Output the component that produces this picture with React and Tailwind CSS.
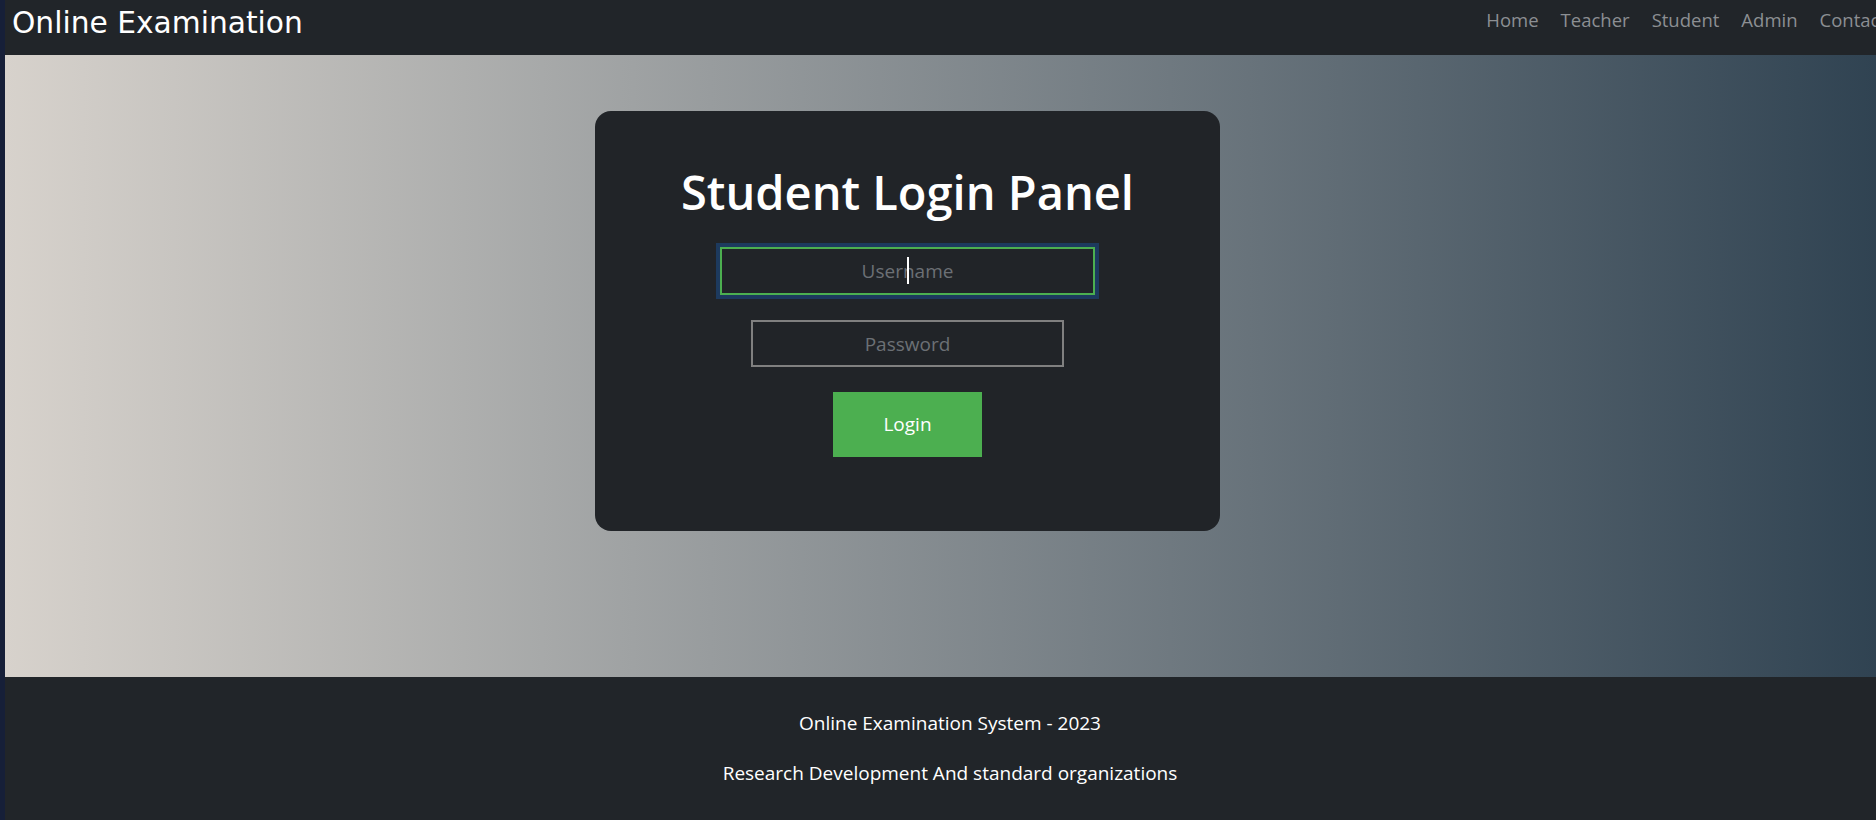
import { useState } from 'react'

const navLinks = ['Home', 'Teacher', 'Student', 'Admin', 'Contact']

export default function App() {
  const [username, setUsername] = useState('')
  const [password, setPassword] = useState('')

  return (
    <div className="flex h-[820px] w-full overflow-hidden bg-[#161f38] pl-[5px]">
      <div className="flex min-w-0 flex-1 flex-col">
        {/* Barre de navigation */}
        <nav className="flex h-[55px] shrink-0 items-start justify-between bg-[#212529] pl-[7px]">
          <span className="pt-[3px] font-['DejaVu_Sans',sans-serif] text-[29.7px] leading-[40px] text-white">
            Online Examination
          </span>
          <ul className="mr-[-10px] flex gap-[22px] pt-[6px] font-['Open_Sans',sans-serif] text-[18.5px] leading-[28px] text-[#8c8f93]">
            {navLinks.map((link) => (
              <li key={link} className="cursor-pointer hover:text-white">
                {link}
              </li>
            ))}
          </ul>
        </nav>

        {/* Contenu principal */}
        <main className="flex h-[622px] shrink-0 justify-center bg-linear-to-r/srgb from-[#d7d2cc] to-[#304352] pr-[66px] pt-[56px]">
          <div className="flex h-[420px] w-[625px] flex-col items-center rounded-[16px] bg-[#212428] font-['Open_Sans',sans-serif]">
            <h1 className="mt-[51px] text-[47px] font-semibold leading-[60px] text-white">
              Student Login Panel
            </h1>
            <div className="relative mt-[25px]">
              <input
                type="text"
                autoFocus
                value={username}
                onChange={(e) => setUsername(e.target.value)}
                placeholder="Username"
                className="block h-[48px] w-[375px] border-2 border-[#4caf50] bg-transparent text-center text-[19px] text-white caret-transparent placeholder-[#6c7075] outline-[4px] outline-offset-0 outline-[#1d3a5e] outline-solid"
              />
              {/* curseur de saisie */}
              <span className="pointer-events-none absolute left-[187px] top-[10px] h-[27px] w-[2px] bg-white" />
            </div>
            <input
              type="password"
              value={password}
              onChange={(e) => setPassword(e.target.value)}
              placeholder="Password"
              className="mt-[25px] h-[47px] w-[313px] border-2 border-[#808080] bg-transparent text-center text-[19px] text-white placeholder-[#6c7075] outline-none"
            />
            <button className="mt-[25px] h-[65px] w-[149px] bg-[#4caf50] text-[19px] text-white">
              Login
            </button>
          </div>
        </main>

        {/* Pied de page */}
        <footer className="flex flex-1 flex-col items-center bg-[#212529] pl-[19px] pt-[33px] font-['Open_Sans',sans-serif] text-[19px] leading-[26px] text-white">
          <p>Online Examination System - 2023</p>
          <p className="mt-[24px]">Research Development And standard organizations</p>
        </footer>
      </div>
    </div>
  )
}
